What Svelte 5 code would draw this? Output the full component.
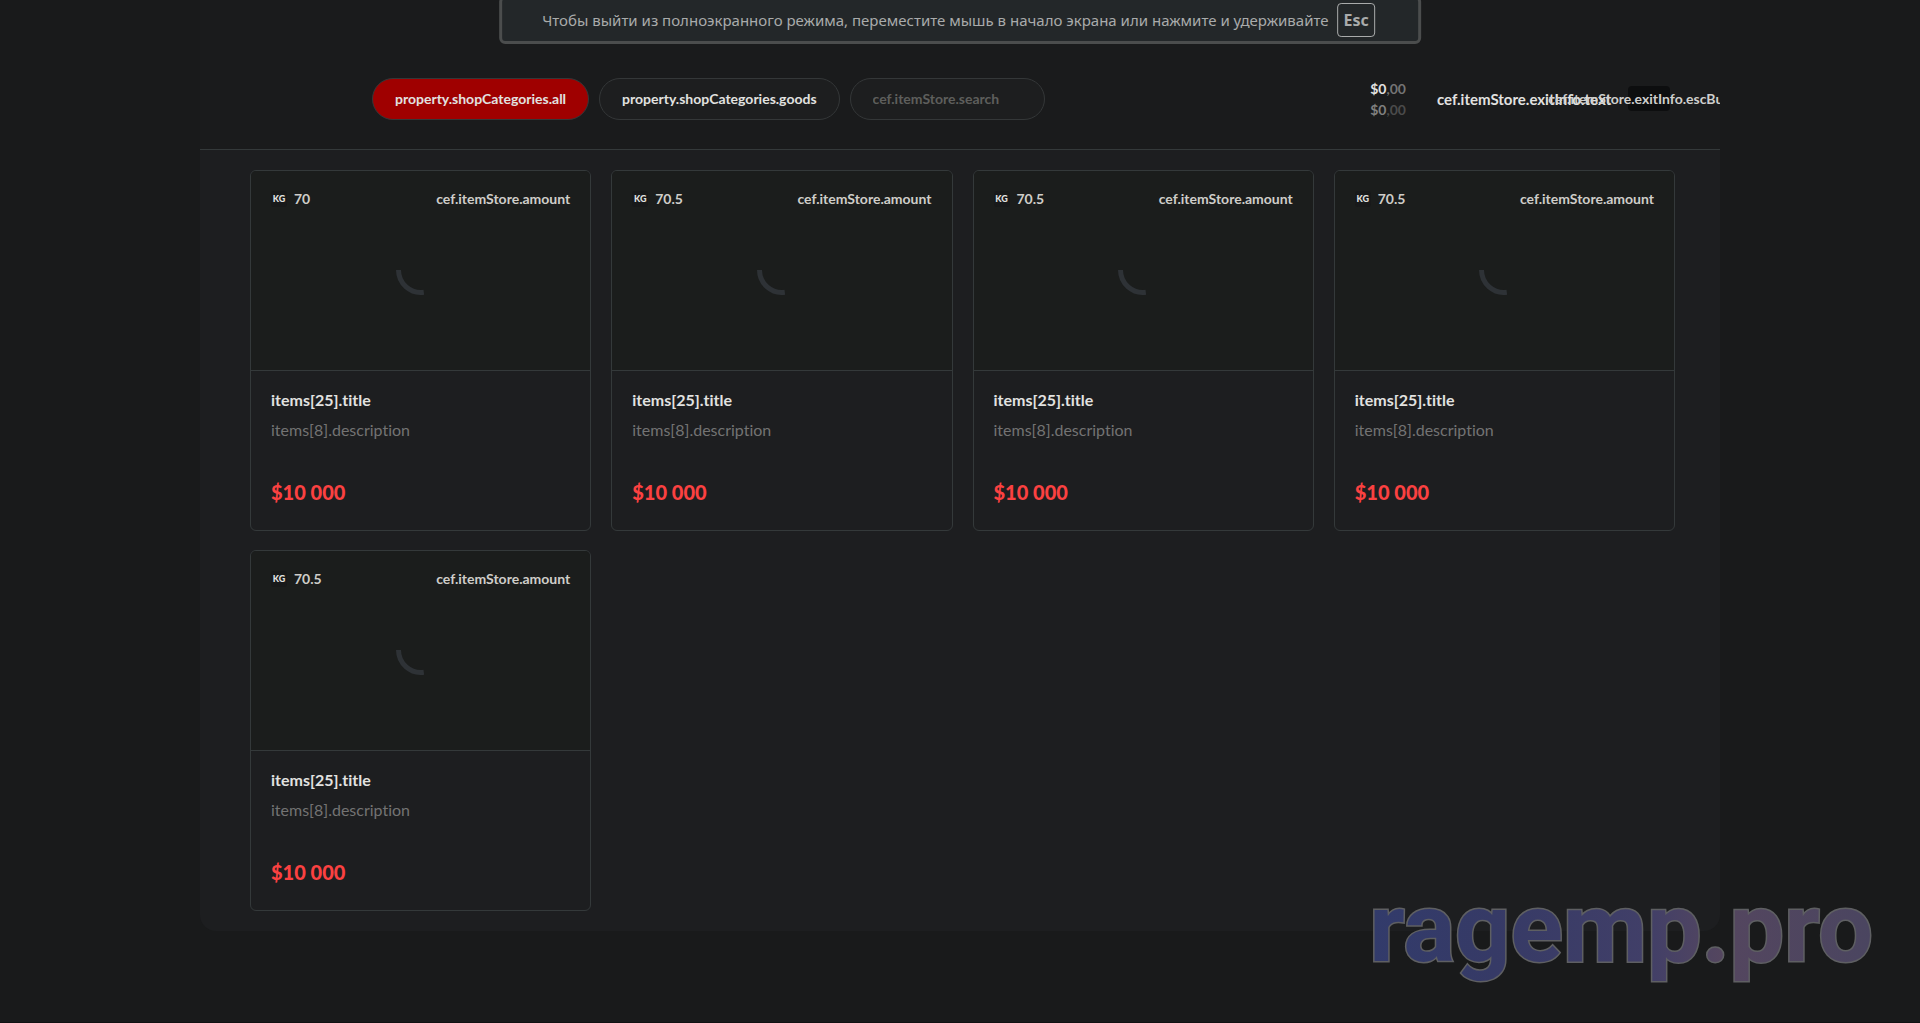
<script>
  const items = ['70', '70.5', '70.5', '70.5', '70.5'].map((weight, id) => ({ id, weight }));
  let search = $state('');
  let category = $state('all');
</script>

<div class="screen">
  <div class="notice" role="status">
    <span>Чтобы выйти из полноэкранного режима, переместите мышь в начало экрана или нажмите и удерживайте</span>
    <kbd>Esc</kbd>
  </div>

  <main class="store">
    <header>
      <nav>
        <button class="pill" class:active={category === 'all'} onclick={() => (category = 'all')}>property.shopCategories.all</button>
        <button class="pill" class:active={category === 'goods'} onclick={() => (category = 'goods')}>property.shopCategories.goods</button>
        <input class="pill" type="text" aria-label="Search" placeholder="cef.itemStore.search" bind:value={search} />
      </nav>
      <div class="balance">
        <div>$0<span>,00</span></div>
        <div class="second">$0<span>,00</span></div>
      </div>
      <div class="exit">
        <span class="exit-text">cef.itemStore.exitInfo.text</span>
        <button class="esc"><span>cef.itemStore.exitInfo.escButton</span></button>
      </div>
    </header>

    <section class="grid">
      {#each items as item (item.id)}
        <article>
          <div class="preview">
            <div class="meta">
              <span class="kg">KG</span>
              <span>{item.weight}</span>
              <span class="amount">cef.itemStore.amount</span>
            </div>
            <svg class="spinner" viewBox="0 0 50 50" aria-hidden="true">
              <path d="M2.5 25A22.5 22.5 0 0 0 27.8 47.3" />
            </svg>
          </div>
          <div class="info">
            <h2>items[25].title</h2>
            <p>items[8].description</p>
            <strong>$10 000</strong>
          </div>
        </article>
      {/each}
    </section>
  </main>

  <svg class="watermark" viewBox="0 0 520 120" aria-label="ragemp.pro">
    <defs>
      <linearGradient id="mark" x1="0" y1="0" x2="1" y2="0">
        <stop offset="0" stop-color="#323b6b" />
        <stop offset="0.25" stop-color="#363a66" />
        <stop offset="0.55" stop-color="#413f68" />
        <stop offset="0.7" stop-color="#54465f" />
        <stop offset="1" stop-color="#4a4560" />
      </linearGradient>
    </defs>
    <text x="511" y="87" text-anchor="end">ragemp.pro</text>
  </svg>
</div>

<style>
  :global(body) {
    background: #191a1b;
  }
  .screen {
    position: relative;
    box-sizing: border-box;
    min-height: 100vh;
    overflow: hidden;
    background: #191a1b;
    border-bottom: 1px solid #101112;
    color: #e2e2e0;
    font-family: Lato, 'Open Sans', sans-serif;
    font-variant-ligatures: none;
  }
  button,
  input {
    font: inherit;
    font-variant-ligatures: none;
    color: inherit;
  }
  .notice {
    position: absolute;
    z-index: 2;
    top: -4px;
    left: 50%;
    transform: translateX(-50%);
    box-sizing: border-box;
    height: 48px;
    display: flex;
    align-items: center;
    gap: 9px;
    padding: 0 43px 0 40px;
    border: 3px solid #4b4d4d;
    border-radius: 6px;
    background: #232729;
    color: #a9abab;
    font: 15px/24px 'Noto Sans', sans-serif;
    white-space: nowrap;
  }
  kbd {
    box-sizing: border-box;
    height: 34px;
    padding: 0 5px;
    border: 1px solid #a9abab;
    border-radius: 4px;
    font: 700 16px/32px 'Noto Sans', sans-serif;
  }
  .store {
    margin: 0 200px;
    overflow: hidden;
    border-radius: 0 0 16px 16px;
    background: #1d1e20;
  }
  header {
    box-sizing: border-box;
    height: 150px;
    display: flex;
    align-items: center;
    padding: 48px 50px 0 172px;
    border-bottom: 1px solid #34393a;
    background: #1a1b1c;
  }
  nav {
    display: flex;
    gap: 10px;
    flex: 1;
  }
  .pill {
    box-sizing: border-box;
    height: 42px;
    padding: 0 22px 1px;
    border: 1px solid #343738;
    border-radius: 21px;
    background: #1d1e1f;
    font-size: 14px;
    font-weight: 700;
  }
  .pill.active {
    background: #9f0000;
  }
  input.pill {
    width: 195px;
    outline: none;
  }
  input::placeholder {
    color: #5e5e5c;
    opacity: 1;
  }
  .balance {
    font-size: 14px;
    line-height: 21px;
    font-weight: 700;
  }
  .balance span {
    color: #747474;
  }
  .balance .second {
    color: #80807f;
  }
  .balance .second span {
    color: #4b4b4b;
  }
  .exit {
    display: flex;
    align-items: center;
    justify-content: space-between;
    width: 233px;
    margin-left: 31px;
    font-weight: 700;
    white-space: nowrap;
  }
  .exit-text {
    width: 181px;
    font-size: 15px;
  }
  .esc {
    display: flex;
    justify-content: center;
    align-items: center;
    width: 42px;
    height: 25px;
    padding: 0;
    border: 0;
    border-radius: 4px;
    background: #0d0e0f;
    font-size: 14px;
    color: #cfcfcd;
    white-space: nowrap;
  }
  .grid {
    display: grid;
    grid-template-columns: repeat(4, 1fr);
    gap: 19px 20px;
    padding: 20px 45px 20px 50px;
  }
  article {
    overflow: hidden;
    border: 1px solid #34393a;
    border-radius: 6px;
  }
  .preview {
    box-sizing: border-box;
    height: 200px;
    display: flex;
    flex-direction: column;
    align-items: center;
    gap: 36px;
    padding: 18px 20px 0;
    border-bottom: 1px solid #34393a;
    background: #1b1d1c;
  }
  .meta {
    display: flex;
    align-items: center;
    align-self: stretch;
    gap: 7px;
    font-size: 14px;
    line-height: 20px;
    font-weight: 700;
    color: #cfcdc9;
  }
  .kg {
    width: 16px;
    line-height: 16px;
    border-radius: 3px;
    background: #18191a;
    text-align: center;
    font-size: 9px;
    font-weight: 900;
    color: #e2e2e0;
  }
  .amount {
    margin-left: auto;
  }
  .spinner {
    width: 50px;
    height: 50px;
  }
  .spinner path {
    fill: none;
    stroke: #2e3236;
    stroke-width: 5;
  }
  .info {
    padding: 19px 20px 24px;
  }
  h2,
  p {
    margin: 0;
    font-size: 16px;
    line-height: 20px;
  }
  h2 {
    font-weight: 700;
  }
  p {
    margin: 10px 0 38px;
    color: #737373;
  }
  strong {
    display: block;
    font-size: 20px;
    line-height: 28px;
    font-weight: 900;
    color: #fb4141;
  }
  .watermark {
    position: absolute;
    right: 38px;
    bottom: 28px;
    width: 520px;
    height: 120px;
  }
  .watermark text {
    font: 700 97px Roboto, sans-serif;
    fill: url(#mark);
    stroke: #5e5f62;
    stroke-width: 3px;
    paint-order: stroke;
  }
</style>
